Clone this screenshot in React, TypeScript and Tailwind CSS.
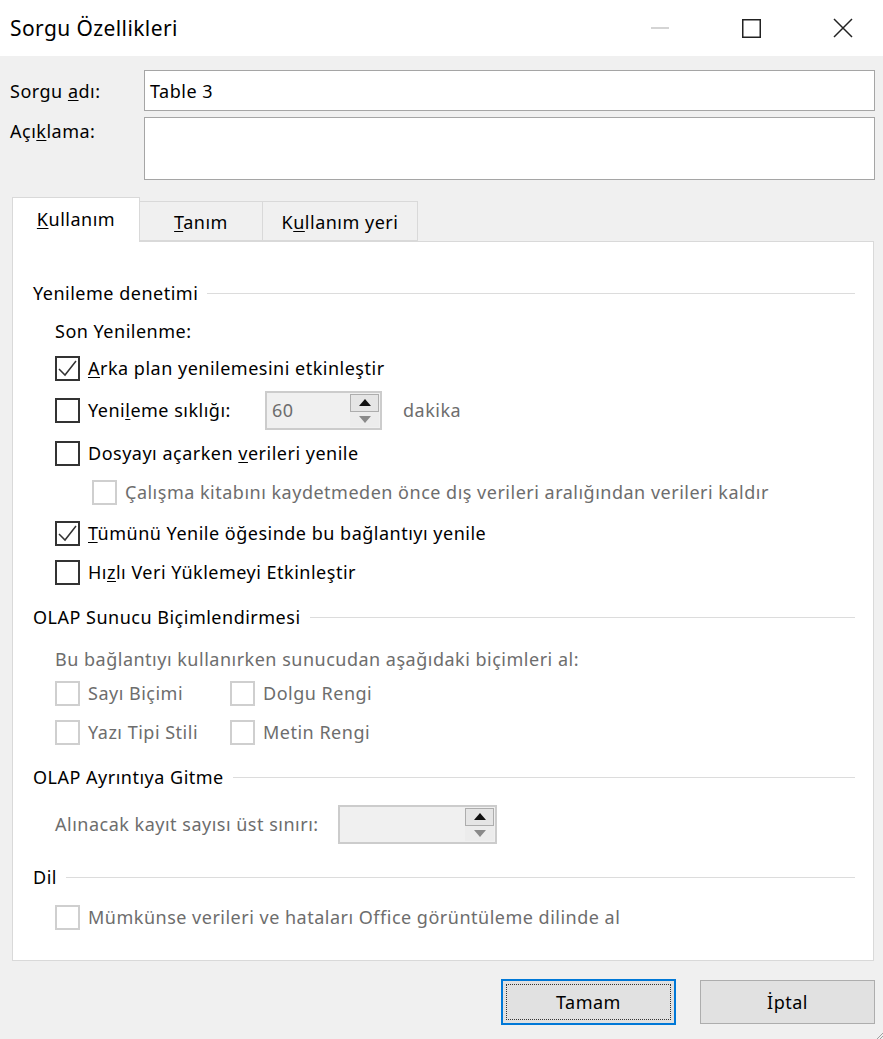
import React from 'react';

// Windows-style "query properties" dialog
const FONT = "font-['Noto_Sans','Open_Sans',sans-serif]";

const CheckBox: React.FC<{ checked?: boolean; disabled?: boolean }> = ({ checked, disabled }) => (
    <span className={`flex h-[25px] w-[25px] shrink-0 items-center justify-center border-2 bg-white ${disabled ? 'border-[#cfcfcf]' : 'border-[#333333]'}`}>
        {checked && (
            <svg width="21" height="21" viewBox="0 0 21 21">
                <path d="M2 11 L8 17 L19 3" fill="none" stroke="#333" strokeWidth="1.5" />
            </svg>
        )}
    </span>
);

const Option: React.FC<{ checked?: boolean; disabled?: boolean; children: React.ReactNode; className?: string }> = ({ checked, disabled, children, className = '' }) => (
    <div className={`flex items-center ${className}`}>
        <CheckBox checked={checked} disabled={disabled} />
        <span className={`ml-[8px] whitespace-nowrap ${disabled ? 'text-[#6d6d6d]' : 'text-black'}`}>{children}</span>
    </div>
);

const GroupHeader: React.FC<{ title: string; className?: string }> = ({ title, className = '' }) => (
    <div className={`flex items-center ${className}`}>
        <span className="whitespace-nowrap">{title}</span>
        <div className="ml-[9px] h-px flex-1 bg-[#dcdcdc]" />
    </div>
);

const Spinner: React.FC<{ value?: string; width: string }> = ({ value, width }) => (
    <div className={`flex h-[39px] ${width} items-stretch border-2 border-[#cccccc] bg-[#f0f0f0]`}>
        <div className="flex flex-1 items-center pl-[5px] text-[#6d6d6d]">{value}</div>
        <div className="flex w-[30px] flex-col py-[1px] pr-[1px]">
            <div className="flex h-[18px] items-center justify-center border border-[#adadad] bg-[#e5e5e5]">
                <svg width="12" height="7" viewBox="0 0 12 7"><path d="M0 7 L6 0 L12 7 Z" fill="#111" /></svg>
            </div>
            <div className="flex flex-1 items-center justify-center bg-[#ececec]">
                <svg width="12" height="7" viewBox="0 0 12 7"><path d="M0 0 L12 0 L6 7 Z" fill="#8a8a8a" /></svg>
            </div>
        </div>
    </div>
);

export default function App() {
    return (
        <div className={`relative flex h-[1039px] w-[883px] flex-col overflow-hidden bg-[#f0f0f0] text-[18px] leading-[24px] tracking-[0.5px] text-black ${FONT}`}>
            {/* Title bar */}
            <div className="flex h-[56px] shrink-0 items-center bg-white">
                <span className="pl-[10px] text-[21px] tracking-[0.4px]">Sorgu Özellikleri</span>
                <svg className="ml-auto" width="18" height="2" viewBox="0 0 18 2"><line x1="0" y1="1" x2="18" y2="1" stroke="#b8b8b8" strokeWidth="1.2" /></svg>
                <svg className="ml-[73px]" width="19" height="19" viewBox="0 0 19 19"><rect x="0.75" y="0.75" width="17.5" height="17.5" fill="none" stroke="#222" strokeWidth="1.5" /></svg>
                <svg className="ml-[72px] mr-[30px]" width="20" height="20" viewBox="0 0 20 20"><path d="M1 1 L19 19 M19 1 L1 19" stroke="#222" strokeWidth="1.5" /></svg>
            </div>

            <div className="flex flex-col pl-[10px] pr-[8px]">
                {/* Name / description */}
                <div className="mt-[14px] flex items-center">
                    <label className="w-[134px]">Sorgu <u className="underline-offset-2">a</u>dı:</label>
                    <div className="flex h-[41px] flex-1 items-center border border-[#a5a5a5] bg-white pl-[5px]">Table 3</div>
                </div>
                <div className="mt-[6px] flex items-start">
                    <label className="w-[134px] pt-[2px]">Açı<u className="underline-offset-2">k</u>lama:</label>
                    <div className="h-[63px] flex-1 border border-[#a5a5a5] bg-white" />
                </div>

                {/* Tabs */}
                <div className="ml-[2px] mt-[17px] flex h-[44px] items-end">
                    <div className="relative z-10 -mb-px flex h-[45px] w-[128px] items-center justify-center border border-b-0 border-[#d9d9d9] bg-white pb-[2px]">
                        <span><u className="underline-offset-2">K</u>ullanım</span>
                    </div>
                    <div className="flex h-[40px] w-[123px] items-center justify-center border border-l-0 border-[#d9d9d9] pt-[2px]">
                        <span><u className="underline-offset-2">T</u>anım</span>
                    </div>
                    <div className="flex h-[40px] w-[155px] items-center justify-center border border-l-0 border-[#d9d9d9] pt-[2px]">
                        <span>K<u className="underline-offset-2">u</u>llanım yeri</span>
                    </div>
                </div>

                {/* Panel */}
                <div className="ml-[2px] mr-[1px] flex flex-col border border-[#d9d9d9] bg-white pb-[23px] pl-[20px] pr-[18px] pt-[32px]">
                    <GroupHeader title="Yenileme denetimi" className="h-[38px]" />
                    <div className="flex h-[38px] items-center pl-[22px]">Son Yenilenme:</div>
                    <Option checked className="h-[36px] pl-[22px]"><u className="underline-offset-2">A</u>rka plan yenilemesini etkinleştir</Option>
                    <div className="flex h-[48px] items-center pl-[22px]">
                        <Option className="w-[210px]">Yeni<u className="underline-offset-2">l</u>eme sıklığı:</Option>
                        <Spinner value="60" width="w-[117px]" />
                        <span className="ml-[21px] text-[#6d6d6d]">dakika</span>
                    </div>
                    <Option className="h-[38px] pl-[22px]">Dosyayı açarken <u className="underline-offset-2">v</u>erileri yenile</Option>
                    <Option disabled className="h-[40px] pl-[59px]">Çalışma kitabını kaydetmeden önce dış verileri aralığından verileri kaldır</Option>
                    <Option checked className="h-[42px] pl-[22px]"><u className="underline-offset-2">T</u>ümünü Yenile öğesinde bu bağlantıyı yenile</Option>
                    <Option className="h-[36px] pl-[22px]">Hı<u className="underline-offset-2">z</u>lı Veri Yüklemeyi Etkinleştir</Option>

                    <GroupHeader title="OLAP Sunucu Biçimlendirmesi" className="h-[54px]" />
                    <div className="flex h-[30px] items-center pl-[22px] text-[#6d6d6d]">Bu bağlantıyı kullanırken sunucudan aşağıdaki biçimleri al:</div>
                    <div className="flex h-[38px] items-center pl-[22px]">
                        <Option disabled className="w-[175px]">Sayı Biçimi</Option>
                        <Option disabled>Dolgu Rengi</Option>
                    </div>
                    <div className="flex h-[40px] items-center pl-[22px]">
                        <Option disabled className="w-[175px]">Yazı Tipi Stili</Option>
                        <Option disabled>Metin Rengi</Option>
                    </div>

                    <GroupHeader title="OLAP Ayrıntıya Gitme" className="h-[50px]" />
                    <div className="flex h-[44px] items-center pl-[22px]">
                        <span className="w-[283px] whitespace-nowrap text-[#6d6d6d]">Alınacak kayıt sayısı üst sınırı:</span>
                        <Spinner width="w-[159px]" />
                    </div>

                    <GroupHeader title="Dil" className="mt-[11px] h-[40px]" />
                    <Option disabled className="h-[40px] pl-[22px]">Mümkünse verileri ve hataları Office görüntüleme dilinde al</Option>
                </div>

                {/* Dialog buttons */}
                <div className="mt-[18px] flex items-center justify-end">
                    <button className="flex h-[46px] w-[175px] border-2 border-[#0078d7] bg-[#e1e1e1] p-[3px]">
                        <span className="flex flex-1 items-center justify-center border border-dotted border-[#333]">Tamam</span>
                    </button>
                    <button className="ml-[24px] flex h-[44px] w-[175px] items-center justify-center border border-[#adadad] bg-[#e1e1e1]">İptal</button>
                </div>
            </div>

            {/* Resize grip */}
            <svg className="absolute bottom-0 right-0" width="8" height="8" viewBox="0 0 8 8">
                <path d="M8 2 L2 8 M8 5 L5 8" stroke="#a0a0a0" strokeWidth="1" />
            </svg>
        </div>
    );
}
